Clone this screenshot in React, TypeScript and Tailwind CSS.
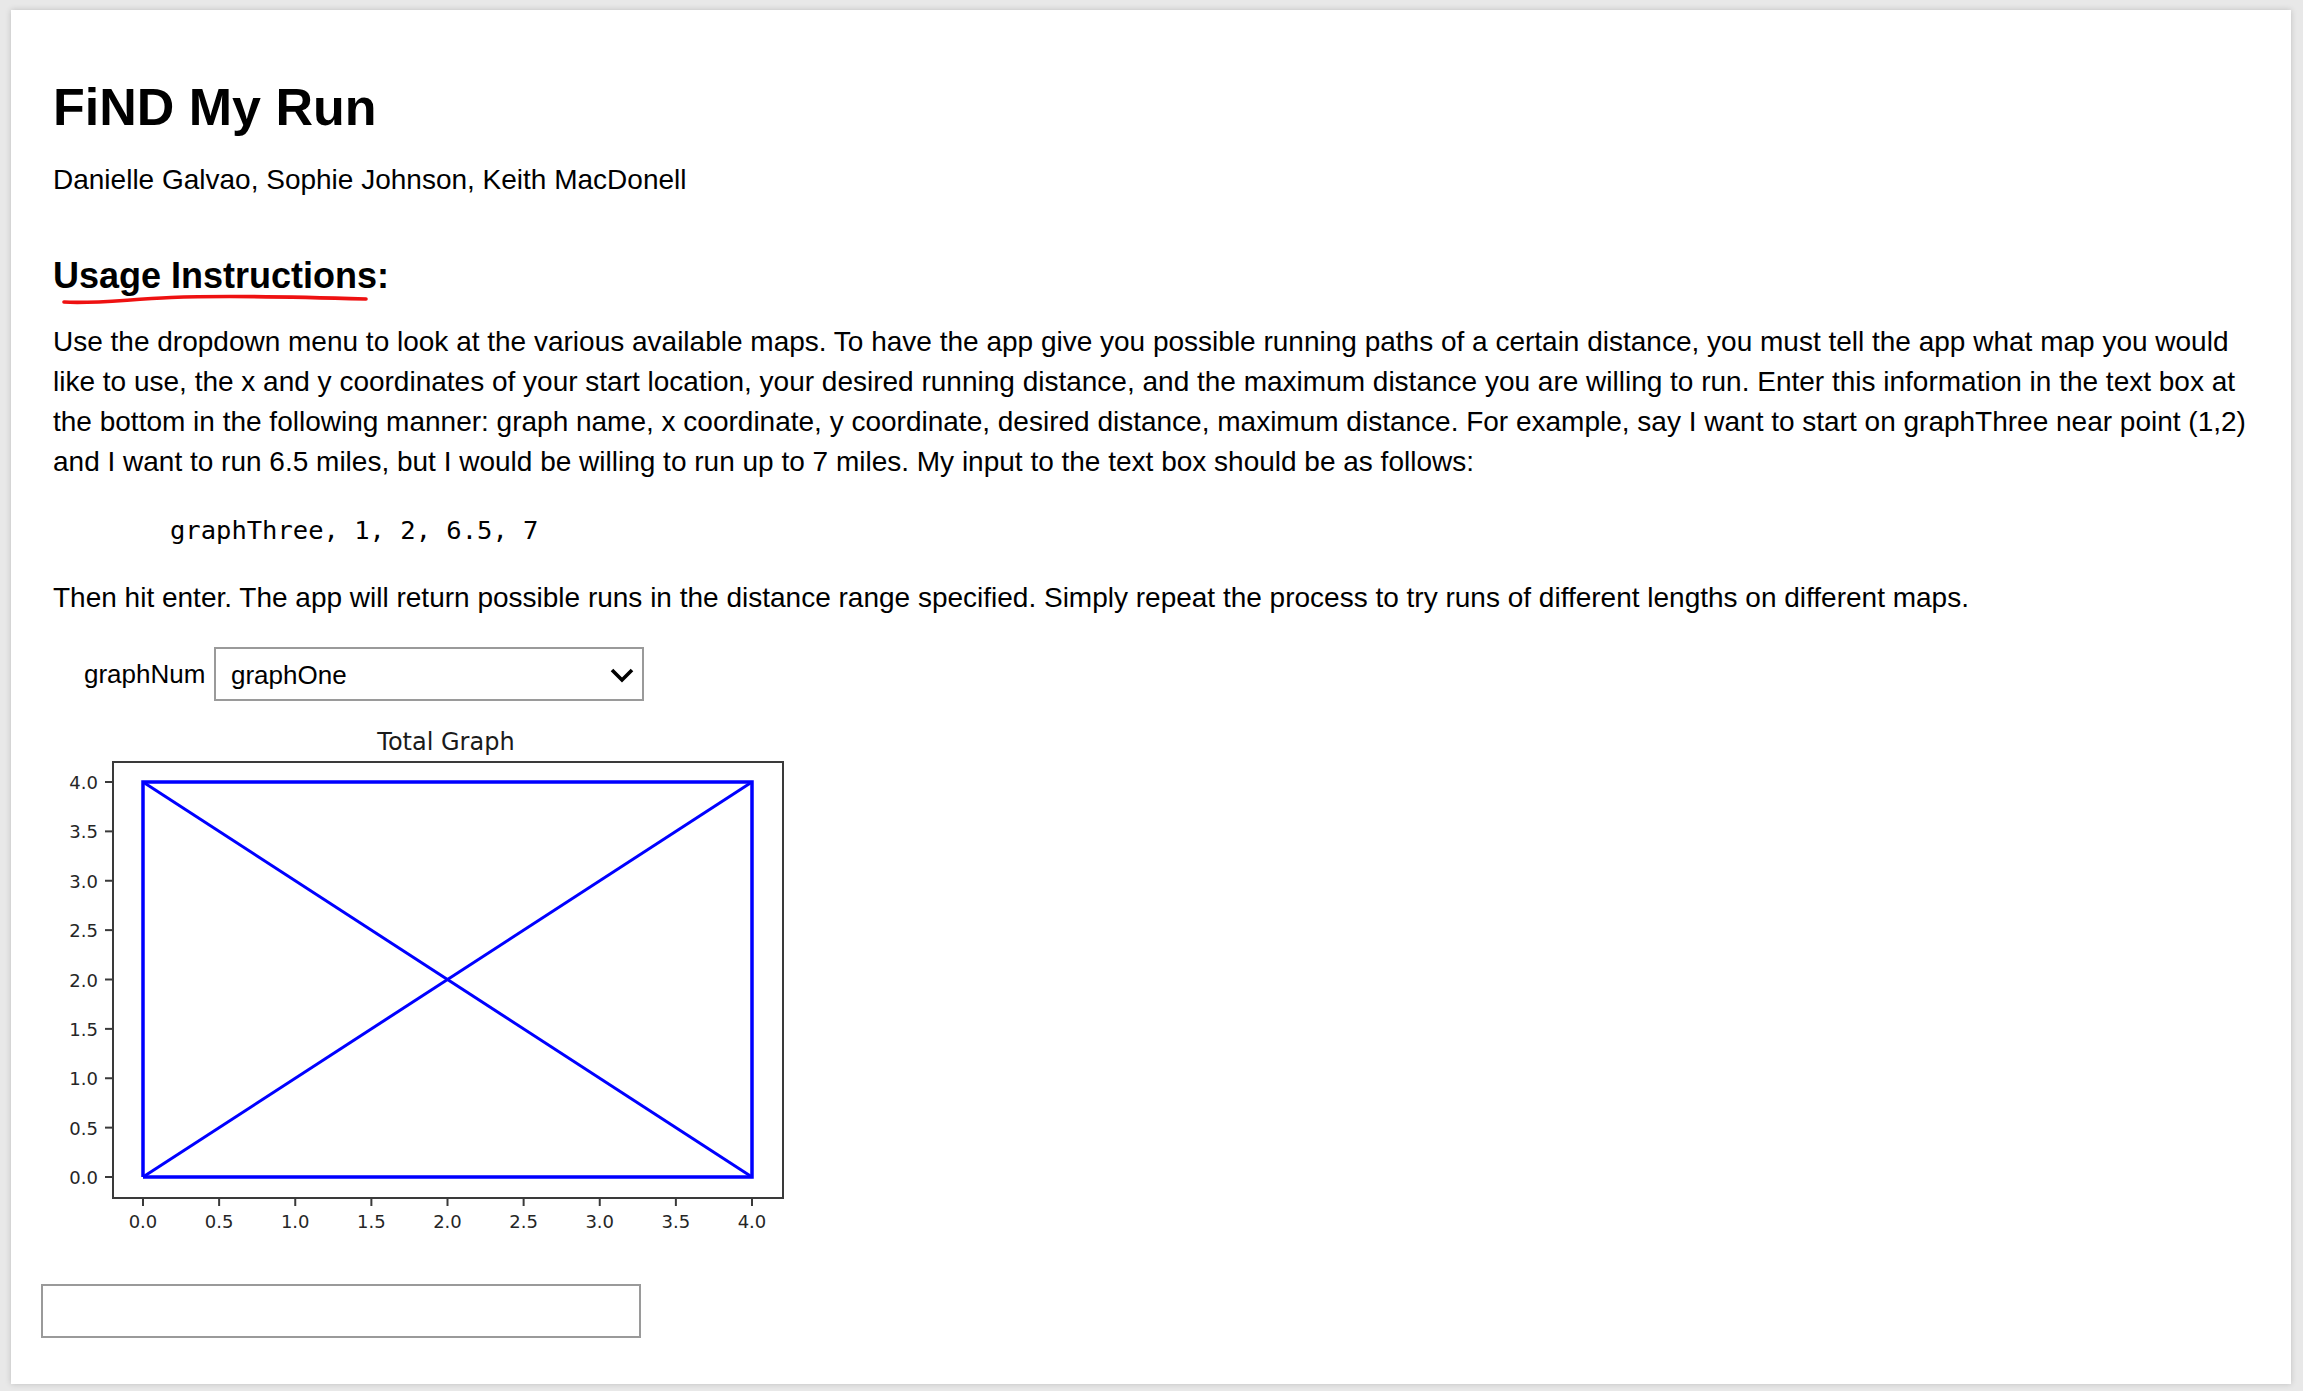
import React from 'react';

const xTicks = ['0.0', '0.5', '1.0', '1.5', '2.0', '2.5', '3.0', '3.5', '4.0'];
const yTicks = ['0.0', '0.5', '1.0', '1.5', '2.0', '2.5', '3.0', '3.5', '4.0'];

// data -> svg coords
const px = (x: number) => 102 + x * 152.25;
const py = (y: number) => 457 - y * 98.75;

const TotalGraph = () => {
    return (
        <svg width="760" height="520" viewBox="0 0 760 520" className="block">
            <text
                x="405"
                y="30"
                textAnchor="middle"
                fontFamily="'DejaVu Sans', sans-serif"
                fontSize="24"
                fill="#1a1a1a"
            >
                Total Graph
            </text>
            <rect x="72" y="42" width="670" height="436" fill="white" stroke="#3a3a3a" strokeWidth="2" />
            {xTicks.map((t, i) => (
                <g key={'x' + t}>
                    <line x1={px(i * 0.5)} x2={px(i * 0.5)} y1="479" y2="486" stroke="#3a3a3a" strokeWidth="2" />
                    <text
                        x={px(i * 0.5)}
                        y="508"
                        textAnchor="middle"
                        fontFamily="'DejaVu Sans', sans-serif"
                        fontSize="18"
                        fill="#262626"
                    >
                        {t}
                    </text>
                </g>
            ))}
            {yTicks.map((t, i) => (
                <g key={'y' + t}>
                    <line x1="64" x2="71" y1={py(i * 0.5)} y2={py(i * 0.5)} stroke="#3a3a3a" strokeWidth="2" />
                    <text
                        x="57"
                        y={py(i * 0.5) + 7}
                        textAnchor="end"
                        fontFamily="'DejaVu Sans', sans-serif"
                        fontSize="18"
                        fill="#262626"
                    >
                        {t}
                    </text>
                </g>
            ))}
            <g stroke="#0000ff" fill="none" strokeLinejoin="miter">
                <polyline
                    points={`${px(0)},${py(0)} ${px(4)},${py(0)} ${px(4)},${py(4)} ${px(0)},${py(4)} ${px(0)},${py(0)}`}
                    strokeWidth="3.5"
                />
                <line x1={px(0)} y1={py(0)} x2={px(4)} y2={py(4)} strokeWidth="3" />
                <line x1={px(0)} y1={py(4)} x2={px(4)} y2={py(0)} strokeWidth="3" />
            </g>
        </svg>
    );
};

const App = () => {
    return (
        <div className="min-h-screen bg-[#e8e8e8] pt-[10px] pl-[11px]" style={{ fontFamily: "'Liberation Sans', Arial, sans-serif" }}>
            <div className="w-[2280px] h-[1374px] bg-white shadow-[0_0_6px_rgba(0,0,0,0.18)] text-black">
                <div className="pl-[42px] pr-[41px] pt-[67px]">
                    <h1 className="text-[52px] leading-[60px] font-bold">FiND My Run</h1>
                    <p className="mt-[23px] text-[28px] leading-[40px]">Danielle Galvao, Sophie Johnson, Keith MacDonell</p>

                    <div className="relative mt-[54px] w-fit">
                        <h3 className="text-[36px] leading-[44px] font-bold">Usage Instructions:</h3>
                        {/* red hand-drawn underline */}
                        <svg className="absolute left-[8px] top-[40px]" width="310" height="12" viewBox="0 0 310 12">
                            <path
                                d="M3 8 C 30 10, 60 6, 110 3.5 C 170 1, 240 3, 305 5"
                                stroke="#ee1111"
                                strokeWidth="3.6"
                                fill="none"
                                strokeLinecap="round"
                            />
                        </svg>
                    </div>

                    <p className="mt-[24px] text-[28px] leading-[40px]">
                        Use the dropdown menu to look at the various available maps. To have the app give you possible running paths of a
                        certain distance, you must tell the app what map you would like to use, the x and y coordinates of your start
                        location, your desired running distance, and the maximum distance you are willing to run. Enter this information
                        in the text box at the bottom in the following manner: graph name, x coordinate, y coordinate, desired distance,
                        maximum distance. For example, say I want to start on graphThree near point (1,2) and I want to run 6.5 miles, but
                        I would be willing to run up to 7 miles. My input to the text box should be as follows:
                    </p>

                    <pre
                        className="mt-[28px] pl-[117px] text-[25.5px] leading-[40px]"
                        style={{ fontFamily: "'DejaVu Sans Mono', monospace" }}
                    >
                        graphThree, 1, 2, 6.5, 7
                    </pre>

                    <p className="mt-[28px] text-[28px] leading-[40px]">
                        Then hit enter. The app will return possible runs in the distance range specified. Simply repeat the process to try
                        runs of different lengths on different maps.
                    </p>
                </div>

                <div className="mt-[29px] ml-[73px] flex items-center gap-[9px]">
                    <label className="text-[26px] leading-[32px] w-[121px]">graphNum</label>
                    <div className="relative w-[430px] h-[54px] border-2 border-[#9a9a9a] flex items-center pl-[15px] text-[26px]">
                        <span className="leading-[32px] pt-[2px]">graphOne</span>
                        <svg className="absolute right-[8px] top-[18px]" width="24" height="16" viewBox="0 0 24 16">
                            <polyline points="2,3 12,13 22,3" stroke="black" strokeWidth="3.6" fill="none" />
                        </svg>
                    </div>
                </div>

                <div className="mt-[19px] ml-[30px]">
                    <TotalGraph />
                </div>

                <div className="mt-[44px] ml-[30px]">
                    <input type="text" className="w-[600px] h-[54px] border-2 border-[#9a9a9a] bg-white outline-none" />
                </div>
            </div>
        </div>
    );
};

export default App;
